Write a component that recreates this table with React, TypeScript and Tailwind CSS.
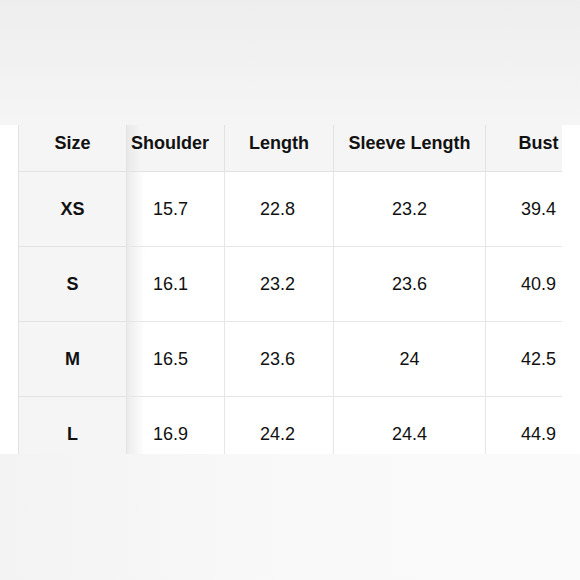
import { Fragment } from "react";

const headers = ["Size", "Shoulder", "Length", "Sleeve Length", "Bust"];

const rows = [
  { size: "XS", values: ["15.7", "22.8", "23.2", "39.4"] },
  { size: "S", values: ["16.1", "23.2", "23.6", "40.9"] },
  { size: "M", values: ["16.5", "23.6", "24", "42.5"] },
  { size: "L", values: ["16.9", "24.2", "24.4", "44.9"] },
];

const App = () => {
  return (
    <div
      className="w-[580px] h-[580px] flex flex-col bg-white text-[#111] overflow-hidden"
      style={{ fontFamily: '"Liberation Sans", Arial, sans-serif' }}
    >
      {/* Top blurred band */}
      <div className="h-[125px] shrink-0 bg-gradient-to-b from-[#eeeeee] to-[#f5f5f5]" />

      {/* Size chart */}
      <div className="flex h-[329px] shrink-0">
        <div className="w-[18px] shrink-0 bg-white" />
        <div className="w-[544px] shrink-0 overflow-hidden">
          <div className="grid grid-cols-[108px_98px_109px_152px_106px] w-[573px] border-l border-[#e2e2e2]">
            {headers.map((h, i) => (
              <div
                key={h}
                className={
                  "h-[47px] pt-[8px] text-[18px] leading-[21px] font-bold whitespace-nowrap border-r border-b border-[#e2e2e2] " +
                  (i === 1
                    ? "pl-[4px] bg-[linear-gradient(to_right,#e9e9e9,#f5f5f5_14px)]"
                    : "text-center bg-[#f5f5f5]")
                }
              >
                {h}
              </div>
            ))}
            {rows.map((row) => (
              <Fragment key={row.size}>
                <div className="h-[75px] flex items-center justify-center text-[18px] font-bold bg-[#f5f5f5] border-r border-b border-[#e2e2e2]">
                  {row.size}
                </div>
                {row.values.map((v, j) => (
                  <div
                    key={j}
                    className={
                      "h-[75px] flex items-center justify-center text-[18px] border-r border-b border-[#e6e6e6] " +
                      (j === 0
                        ? "pr-[10px] bg-[linear-gradient(to_right,#ececec,#ffffff_18px)]"
                        : j === 1
                          ? "pr-[3px] bg-white"
                          : "bg-white")
                    }
                  >
                    {v}
                  </div>
                ))}
              </Fragment>
            ))}
          </div>
        </div>
        <div className="flex-1 bg-white" />
      </div>

      {/* Bottom blurred band */}
      <div className="flex-1 bg-gradient-to-r from-[#f3f3f3] via-[#f9f9f9] to-[#fafafa]" />
    </div>
  );
};

export default App;
